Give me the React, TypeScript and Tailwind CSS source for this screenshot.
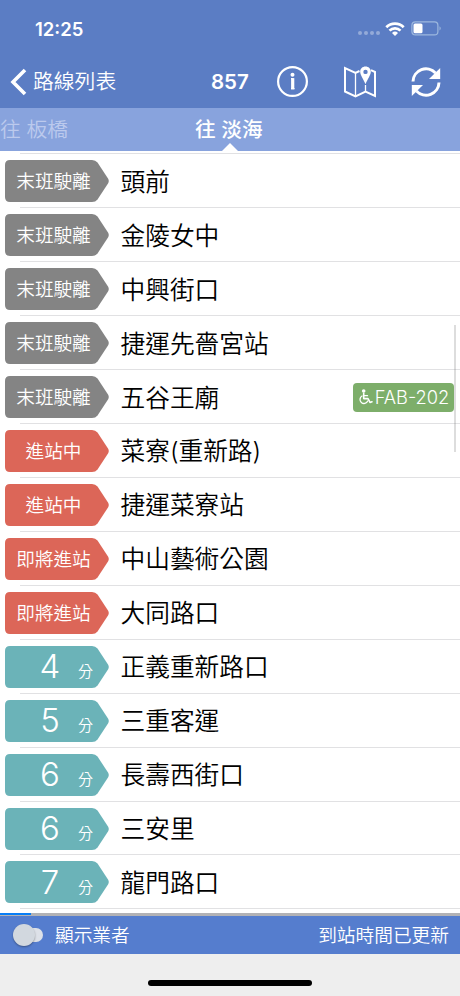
import type { ReactNode } from "react";

const CJK = "font-['Inter','Noto_Sans_CJK_TC',sans-serif]";

type Stop = { name: string; kind: "gone" | "near" | "min"; label: string; bus?: string };

const stops: Stop[] = [
  { name: "頭前", kind: "gone", label: "末班駛離" },
  { name: "金陵女中", kind: "gone", label: "末班駛離" },
  { name: "中興街口", kind: "gone", label: "末班駛離" },
  { name: "捷運先嗇宮站", kind: "gone", label: "末班駛離" },
  { name: "五谷王廟", kind: "gone", label: "末班駛離", bus: "FAB-202" },
  { name: "菜寮(重新路)", kind: "near", label: "進站中" },
  { name: "捷運菜寮站", kind: "near", label: "進站中" },
  { name: "中山藝術公園", kind: "near", label: "即將進站" },
  { name: "大同路口", kind: "near", label: "即將進站" },
  { name: "正義重新路口", kind: "min", label: "4" },
  { name: "三重客運", kind: "min", label: "5" },
  { name: "長壽西街口", kind: "min", label: "6" },
  { name: "三安里", kind: "min", label: "6" },
  { name: "龍門路口", kind: "min", label: "7" },
];

const tagFill = { gone: "text-[#848484]", near: "text-[#dc6658]", min: "text-[#6bb3b8]" };

function Tag({ kind, children }: { kind: Stop["kind"]; children: ReactNode }) {
  return (
    <div className="relative ml-[5px] h-[42px] w-[104px] shrink-0">
      <svg className={`absolute inset-0 ${tagFill[kind]}`} width="104" height="42" viewBox="0 0 104 42" fill="currentColor">
        <path d="M5 0H87Q90.500 0 92.500 2.500L103 18.500Q104.500 21 103 23.500L92.500 39.500Q90.500 42 87 42H5Q0 42 0 37V5Q0 0 5 0Z" />
      </svg>
      <div className="relative flex h-full w-[97px] items-center justify-center text-white">{children}</div>
    </div>
  );
}

function Row({ stop }: { stop: Stop }) {
  return (
    <div className="relative flex h-[53.94px] items-center">
      <Tag kind={stop.kind}>
        {stop.kind === "min" ? (
          <>
            <span className="mb-[1px] ml-[33px] w-[24px] text-center text-[33px] leading-[40px] font-light">{stop.label}</span>
            <span className="mt-[11px] mr-[8px] ml-auto w-[16px] text-[15px] leading-[20px] font-[350]">分</span>
          </>
        ) : (
          <span className="text-[18.6px] leading-[26px] font-[350]">{stop.label}</span>
        )}
      </Tag>
      <span className="ml-[11.500px] pt-[1px] text-[24.7px] leading-[36px] font-[350] whitespace-nowrap text-black">{stop.name}</span>
      {stop.bus && (
        <span className="mr-[6px] ml-auto flex h-[29px] w-[101px] items-center justify-center gap-[2px] rounded-[4px] bg-[#7dae6a] text-white">
          <svg width="15" height="16" viewBox="0 0 15 16" fill="none" stroke="currentColor" strokeWidth="1.3" strokeLinecap="round" strokeLinejoin="round">
            <circle cx="5.700" cy="2" r="1.800" fill="currentColor" stroke="none" />
            <path d="M5.700 4.200V9.600H10L12 13.400L14 12.700" strokeWidth="1.600" />
            <path d="M6 6.700H9.500" />
            <path d="M4 7A4 4 0 1 0 9.700 12" />
          </svg>
          <span className="text-[18.3px] leading-[28px] font-[350]">{stop.bus}</span>
        </span>
      )}
      <span className="absolute right-0 bottom-0 left-[20px] h-px bg-[#e1e1e3]" />
    </div>
  );
}

function StatusBar() {
  return (
    <div className="flex h-[55px] items-center pt-[2px] pr-[18px] pl-[35px]">
      <span className="text-[18.500px] leading-[24px] font-semibold">12:25</span>
      <div className="ml-auto flex items-center">
        <div className="mt-[9px] mr-[5px] flex gap-[2px] opacity-35">
          {[0, 1, 2, 3].map((i) => (
            <i key={i} className="size-[4px] rounded-full bg-white" />
          ))}
        </div>
        <svg width="20" height="14" viewBox="0 0 20 14" fill="none" stroke="currentColor" strokeWidth="2.700">
          <path d="M1.300 5.200A12.300 12.300 0 0 1 18.700 5.200" />
          <path d="M4.500 8.600A7.800 7.800 0 0 1 15.500 8.600" />
          <path d="M7 11L10 14L13 11A4.300 4.300 0 0 0 7 11Z" fill="currentColor" stroke="none" />
        </svg>
        <svg className="ml-[6px]" width="31" height="15" viewBox="0 0 31 15">
          <rect x="0.900" y="0.900" width="26" height="13" rx="3.500" fill="none" stroke="#9db8de" strokeWidth="1.200" />
          <rect x="2.500" y="2.500" width="9" height="9.800" rx="1.500" fill="#fff" />
          <path d="M28.500 5.300Q31 7.400 28.500 9.500Z" fill="#9db8de" />
        </svg>
      </div>
    </div>
  );
}

function NavBar() {
  return (
    <div className="flex h-[53px] items-center pl-[10px]">
      <svg width="17" height="28" viewBox="0 0 17 28" fill="none" stroke="currentColor" strokeWidth="3.600">
        <path d="M15 2L3 14L15 26" />
      </svg>
      <span className="ml-[6px] w-[85px] pt-[1px] text-[20.800px] leading-[30px] font-[350] whitespace-nowrap">路線列表</span>
      <span className="ml-[93px] w-[39px] text-[20.500px] leading-[28px] font-semibold">857</span>
      <svg className="ml-[26px]" width="33" height="33" viewBox="0 0 33 33" fill="none" stroke="currentColor">
        <circle cx="16.500" cy="16.500" r="14.400" strokeWidth="2.200" />
        <circle cx="16.500" cy="9.700" r="2" fill="currentColor" stroke="none" />
        <path d="M15 13.700H16.700M15 23.700H18.500" strokeWidth="1.200" />
        <path d="M16.700 13.100V24.300" strokeWidth="3.200" />
      </svg>
      <svg className="ml-[34px]" width="34" height="34" viewBox="0 0 34 34" fill="none" stroke="currentColor" strokeWidth="2">
        <path d="M16.500 6L12.500 8L2 3V26.500L12.500 31.500L22.500 26.500L32 31V7L28 5.200" />
        <path d="M12.500 8V31" strokeWidth="1.300" />
        <path d="M22.500 20V26" strokeWidth="1.300" />
        <path fillRule="evenodd" d="M22.500 1.500C19.400 1.500 17.200 3.700 17.200 6.700C17.200 10 20 13 22.500 19.200C25 13 27.800 10 27.800 6.700C27.800 3.700 25.600 1.500 22.500 1.500ZM22.500 4.700A2.200 2.200 0 1 1 22.500 9.100A2.200 2.200 0 0 1 22.500 4.700Z" fill="currentColor" stroke="none" />
      </svg>
      <svg className="ml-[34px]" width="30" height="30" viewBox="0 0 30 30" fill="none" stroke="currentColor" strokeWidth="3">
        <path d="M2 14.500A13 13 0 0 1 24.500 6" />
        <path d="M28 15.500A13 13 0 0 1 5.500 24" />
        <path d="M29.200 1V12H18Z" fill="currentColor" stroke="none" />
        <path d="M0.800 29V18H12Z" fill="currentColor" stroke="none" />
      </svg>
    </div>
  );
}

export default function App() {
  return (
    <div className={`flex h-[996px] w-[460px] flex-col overflow-hidden bg-white ${CJK}`}>
      <header className="shrink-0 bg-[#5b7dc4] text-white">
        <StatusBar />
        <NavBar />
      </header>
      <div className="relative flex h-[43px] shrink-0 items-center bg-[#88a3dd] pt-[1px] text-[20.700px] leading-[30px] text-white">
        <span className="w-[195px] font-[350] whitespace-nowrap text-[#bccaed]">往 板橋</span>
        <span className="font-medium whitespace-nowrap">往 淡海</span>
        <svg className="absolute bottom-0 left-[222px]" width="16" height="8" viewBox="0 0 16 8" fill="#fff">
          <path d="M0 8L8 0L16 8Z" />
        </svg>
      </div>
      <main className="relative h-[762px] shrink-0 overflow-hidden bg-white">
        <div className="ml-[20px] h-px translate-y-[2px] bg-[#e1e1e3]" />
        <div className="pt-[2.300px]">
          {stops.map((s, i) => (
            <Row key={i} stop={s} />
          ))}
        </div>
        <div className="absolute top-[174px] right-[4px] h-[127px] w-[2.500px] bg-[#777]/25" />
      </main>
      <div className="h-[3px] shrink-0 bg-[#b2b2b5]">
        <div className="h-[2px] w-[31px] bg-[#087df5]" />
      </div>
      <footer className="flex h-[38px] shrink-0 items-center bg-[#557dce] pr-[11px] pl-[13px] text-[18.700px] leading-[28px] font-[350] text-white">
        <div className="flex w-[30px] items-center">
          <span className="z-10 size-[22px] shrink-0 rounded-full bg-[#d2d8df] shadow-[0_1px_2px_rgba(0,0,0,0.35)]" />
          <span className="-ml-[11px] h-[14px] w-[19px] shrink-0 rounded-full bg-[#dde1e8]" />
        </div>
        <span className="ml-[12px] pt-[1px]">顯示業者</span>
        <span className="ml-auto pt-[1px]">到站時間已更新</span>
      </footer>
      <div className="flex h-[42px] shrink-0 justify-center bg-[#eeeeee] pt-[26px]">
        <div className="h-[6px] w-[164px] rounded-full bg-black" />
      </div>
    </div>
  );
}
